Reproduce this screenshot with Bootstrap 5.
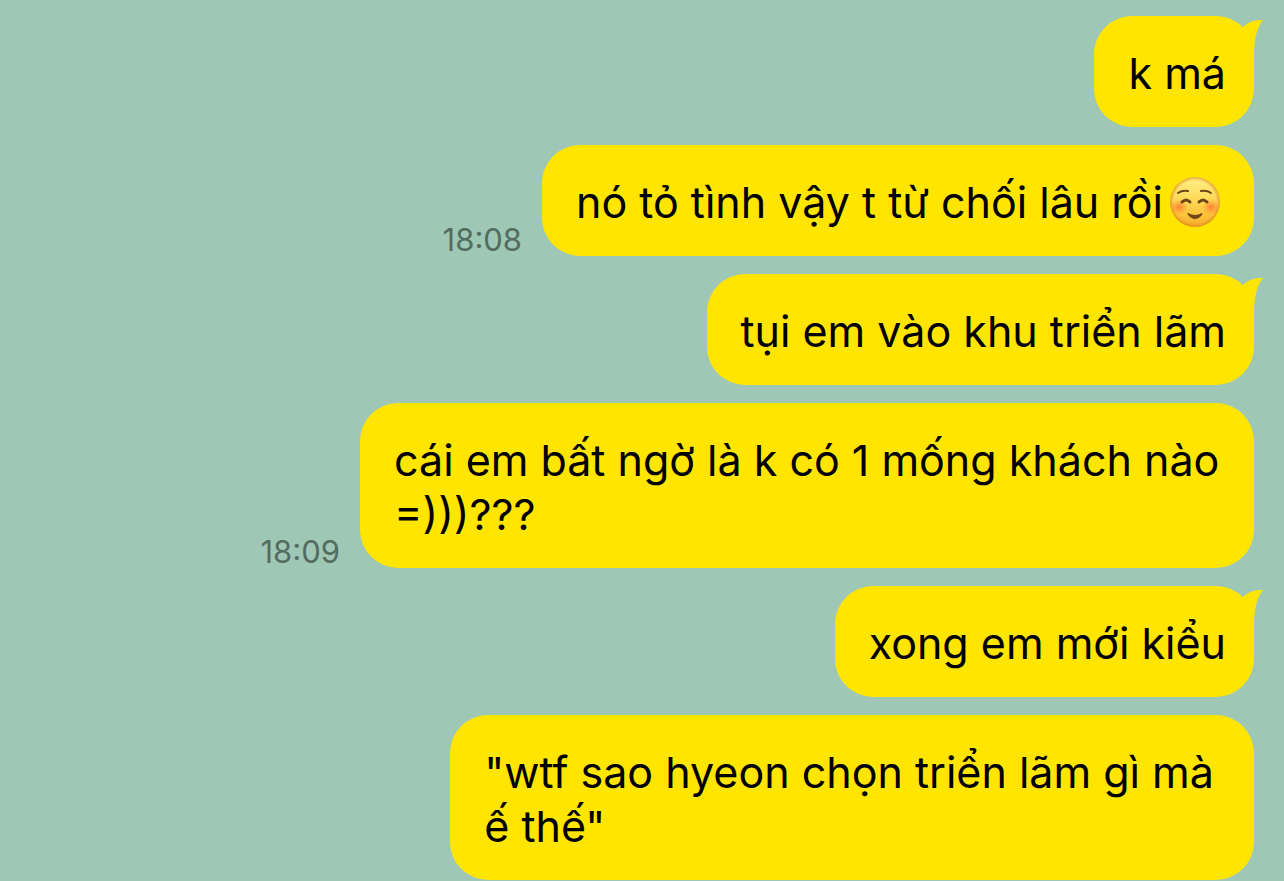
<!DOCTYPE html>
<html lang="vi">
<head>
<meta charset="utf-8">
<meta name="viewport" content="width=device-width, initial-scale=1">
<title>Chat</title>
<link href="https://cdn.jsdelivr.net/npm/bootstrap@5.3.0/dist/css/bootstrap.min.css" rel="stylesheet">
<style>
body{background:#9fc7b6;color:#000;font-family:Inter,"Liberation Sans",sans-serif}
.chat{padding:16px 30px 1px;gap:18px}
.msg{gap:20px}
.bubble{background:#ffe500;border-radius:38px;padding:30px 28px 27px 34px;font-size:43px;line-height:54px;max-width:894px}
.tail{position:absolute;top:3px;right:-10px;width:40px;height:40px;fill:#ffe500}
.stamp{color:#536c60;font-size:31px;line-height:32px}
.face{width:52px;height:52px;margin:0 5px 0 6px;vertical-align:-10px}
</style>
</head>
<body>
<svg class="d-none" aria-hidden="true"><symbol id="tail" viewBox="0 0 40 40"><path d="M13 13L19 8Q27 0 39 1Q30 12 30 36L13 36Z"/></symbol></svg>
<main class="chat d-flex flex-column">
<div class="msg d-flex justify-content-end align-items-end"><div class="bubble position-relative">k má<svg class="tail" aria-hidden="true"><use href="#tail"/></svg></div></div>
<div class="msg d-flex justify-content-end align-items-end"><time class="stamp" datetime="18:08">18:08</time><div class="bubble">nó tỏ tình vậy t từ chối lâu rồi<svg class="face" viewBox="0 0 52 52" role="img" aria-label="☺️">
<defs>
<linearGradient id="skin" x1="0" y1="0" x2="0" y2="1"><stop offset="0" stop-color="#fff08a"/><stop offset=".35" stop-color="#ffdf62"/><stop offset=".75" stop-color="#fdc43a"/><stop offset="1" stop-color="#f2aa2c"/></linearGradient>
<radialGradient id="rim"><stop offset=".84" stop-color="#e58a18" stop-opacity="0"/><stop offset="1" stop-color="#dd8617" stop-opacity=".7"/></radialGradient>
<radialGradient id="blush"><stop offset="0" stop-color="#ff6f2c" stop-opacity=".8"/><stop offset="1" stop-color="#ff7a35" stop-opacity="0"/></radialGradient>
</defs>
<circle cx="26" cy="26" r="25" fill="url(#skin)"/><circle cx="26" cy="26" r="25" fill="url(#rim)"/>
<ellipse cx="10" cy="31" rx="9" ry="8" fill="url(#blush)"/><ellipse cx="42" cy="31" rx="9" ry="8" fill="url(#blush)"/>
<g fill="none" stroke="#70451a" stroke-linecap="round"><path stroke-width="2" d="M9 17Q13 14 19 15M32 15Q38 14 42 17"/><path stroke-width="3" d="M13 26Q17 22 21 26M30 26Q34 22 38 26"/></g><path fill="#70451a" d="M19 37Q26 41 33 37Q34 37 33 39Q26 47 19 39Q18 37 19 37Z"/>
</svg></div></div>
<div class="msg d-flex justify-content-end align-items-end"><div class="bubble position-relative">tụi em vào khu triển lãm<svg class="tail" aria-hidden="true"><use href="#tail"/></svg></div></div>
<div class="msg d-flex justify-content-end align-items-end"><time class="stamp" datetime="18:09">18:09</time><div class="bubble">cái em bất ngờ là k có 1 mống khách nào =)))???</div></div>
<div class="msg d-flex justify-content-end align-items-end"><div class="bubble position-relative">xong em mới kiểu<svg class="tail" aria-hidden="true"><use href="#tail"/></svg></div></div>
<div class="msg d-flex justify-content-end align-items-end"><div class="bubble">"wtf sao hyeon chọn triển lãm gì mà&nbsp;<br>ế thế"</div></div>
</main>
<script src="https://cdn.jsdelivr.net/npm/bootstrap@5.3.0/dist/js/bootstrap.bundle.min.js"></script>
</body>
</html>
